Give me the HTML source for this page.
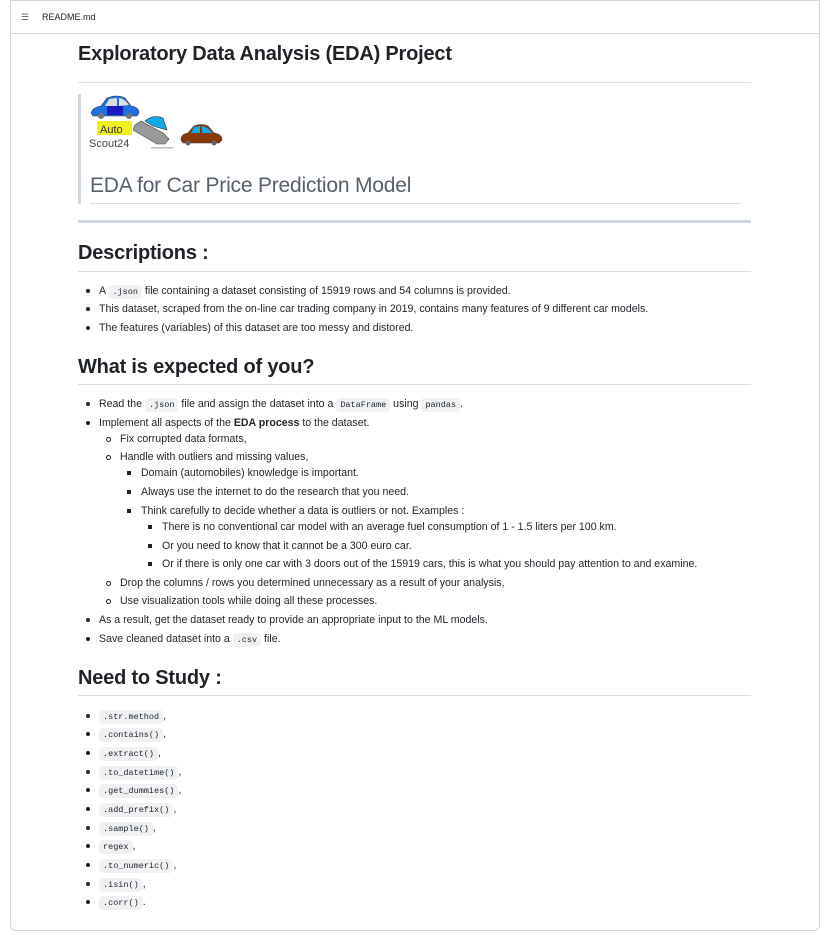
<!DOCTYPE html>
<html><head><meta charset="utf-8"><style>
body{margin:0;width:827px;height:935px;background:#fff;position:relative;overflow:hidden;font-family:"Liberation Sans",sans-serif;color:#1f2328}
.box{position:absolute;left:10px;top:0;width:808px;height:929px;border:1px solid #d0d7de;border-radius:0 0 6px 6px}
.hdr{position:absolute;left:10px;top:33px;width:809px;height:1px;background:#d0d7de}
.t{position:absolute;font-size:10.6px;line-height:18px;white-space:nowrap}
.h{position:absolute;font-size:20px;font-weight:bold;line-height:28px;white-space:nowrap;letter-spacing:-0.2px}
.ln{position:absolute;height:1px;background:#d8dee4}
code{font-family:"Liberation Mono",monospace;font-size:8.5px;background:#eff1f3;border-radius:4px;padding:2px 4px;color:#1f2328}
.b{position:absolute;width:4px;height:4px;border-radius:50%;background:#1f2328}
.c{position:absolute;width:3px;height:3px;border-radius:50%;border:1px solid #1f2328}
.s{position:absolute;width:4px;height:4px;background:#1f2328}
</style></head><body>
<div class="box"></div><div class="hdr"></div>
<div class="t" style="left:21px;top:8px;font-size:9px;color:#57606a">&#9776;</div>
<div class="t" style="left:42px;top:8px;font-size:9px">README.md</div>

<div class="h" style="left:78px;top:40px">Exploratory Data Analysis (EDA) Project</div>
<div class="ln" style="left:78px;top:82px;width:673px"></div>

<div style="position:absolute;left:78px;top:94px;width:3px;height:110px;background:#d0d7de"></div>
<svg style="position:absolute;left:89px;top:95px" width="140" height="58" viewBox="0 0 140 58">
<path d="M2 18 Q4 12 12 11 L18 3 Q28 -1 36 3 L42 11 Q50 12 50 18 L48 21 H4Z" fill="#1e6fe0" stroke="#333" stroke-width="0.6"/>
<path d="M20 4 L28 3 L28 11 L16 11Z" fill="#ddd"/><path d="M30 3 Q36 4 40 10 L30 11Z" fill="#ddd"/>
<rect x="18" y="11" width="16" height="9" fill="#1a1ac0"/>
<circle cx="12" cy="21" r="3" fill="#777"/><circle cx="40" cy="21" r="3" fill="#777"/>
<rect x="8" y="26" width="35" height="14" fill="#f0f020"/>
<text x="11" y="38" font-family="Liberation Sans,sans-serif" font-size="11" fill="#333">Auto</text>
<text x="0" y="52" font-family="Liberation Sans,sans-serif" font-size="11" fill="#444">Scout24</text>
<path d="M46 30 L52 26 L74 38 L80 44 L76 49 L68 49 L44 35Z" fill="#999" stroke="#444" stroke-width="0.6"/>
<path d="M56 26 Q64 19 74 23 L78 35 L64 31Z" fill="#14a8e8" stroke="#333" stroke-width="0.6"/>
<rect x="62" y="52" width="22" height="1.5" fill="#bbb"/>
<path d="M92 45 Q92 39 99 38 L105 31 Q113 28 119 31 L125 38 Q133 39 133 45 L130 48 H94Z" fill="#8a3a08" stroke="#333" stroke-width="0.6"/>
<path d="M105 32 L111 31 L111 38 L102 38Z" fill="#14a8e8"/><path d="M113 31 Q119 32 123 38 L113 38Z" fill="#14a8e8"/>
<circle cx="99" cy="48" r="2.5" fill="#666"/><circle cx="125" cy="48" r="2.5" fill="#666"/>
</svg>
<div class="h" style="left:90px;top:172px;color:#57606a;font-weight:normal;font-size:21px">EDA for Car Price Prediction Model</div>
<div class="ln" style="left:90px;top:203px;width:651px"></div>
<div style="position:absolute;left:78px;top:220px;width:673px;height:3px;background:#d0d7de"></div>

<div class="h" style="left:78px;top:239px">Descriptions :</div>
<div class="ln" style="left:78px;top:271px;width:673px"></div>
<div class="b" style="left:86px;top:289px"></div><div class="t" style="left:99px;top:282px">A <code>.json</code> file containing a dataset consisting of 15919 rows and 54 columns is provided.</div>
<div class="b" style="left:86px;top:307px"></div><div class="t" style="left:99px;top:300px">This dataset, scraped from the on-line car trading company in 2019, contains many features of 9 different car models.</div>
<div class="b" style="left:86px;top:326px"></div><div class="t" style="left:99px;top:319px">The features (variables) of this dataset are too messy and distored.</div>

<div class="h" style="left:78px;top:353px">What is expected of you?</div>
<div class="ln" style="left:78px;top:384px;width:673px"></div>
<div class="b" style="left:86px;top:402px"></div><div class="t" style="left:99px;top:395px">Read the <code>.json</code> file and assign the dataset into a <code>DataFrame</code> using <code>pandas</code>.</div>
<div class="b" style="left:86px;top:421px"></div><div class="t" style="left:99px;top:414px">Implement all aspects of the <b>EDA process</b> to the dataset.</div>
<div class="c" style="left:106px;top:437px"></div><div class="t" style="left:120px;top:430px">Fix corrupted data formats,</div>
<div class="c" style="left:106px;top:455px"></div><div class="t" style="left:120px;top:448px">Handle with outliers and missing values,</div>
<div class="s" style="left:127px;top:471px"></div><div class="t" style="left:141px;top:464px">Domain (automobiles) knowledge is important.</div>
<div class="s" style="left:127px;top:490px"></div><div class="t" style="left:141px;top:483px">Always use the internet to do the research that you need.</div>
<div class="s" style="left:127px;top:509px"></div><div class="t" style="left:141px;top:502px">Think carefully to decide whether a data is outliers or not. Examples :</div>
<div class="s" style="left:148px;top:525px"></div><div class="t" style="left:162px;top:518px">There is no conventional car model with an average fuel consumption of 1 - 1.5 liters per 100 km.</div>
<div class="s" style="left:148px;top:544px"></div><div class="t" style="left:162px;top:537px">Or you need to know that it cannot be a 300 euro car.</div>
<div class="s" style="left:148px;top:562px"></div><div class="t" style="left:162px;top:555px">Or if there is only one car with 3 doors out of the 15919 cars, this is what you should pay attention to and examine.</div>
<div class="c" style="left:106px;top:581px"></div><div class="t" style="left:120px;top:574px">Drop the columns / rows you determined unnecessary as a result of your analysis,</div>
<div class="c" style="left:106px;top:599px"></div><div class="t" style="left:120px;top:592px">Use visualization tools while doing all these processes.</div>
<div class="b" style="left:86px;top:618px"></div><div class="t" style="left:99px;top:611px">As a result, get the dataset ready to provide an appropriate input to the ML models.</div>
<div class="b" style="left:86px;top:637px"></div><div class="t" style="left:99px;top:630px">Save cleaned dataset into a <code>.csv</code> file.</div>

<div class="h" style="left:78px;top:664px">Need to Study :</div>
<div class="ln" style="left:78px;top:695px;width:673px"></div>
<div class="b" style="left:86px;top:714px"></div><div class="t" style="left:99px;top:707px"><code>.str.method</code>,</div>
<div class="b" style="left:86px;top:732px"></div><div class="t" style="left:99px;top:725px"><code>.contains()</code>,</div>
<div class="b" style="left:86px;top:751px"></div><div class="t" style="left:99px;top:744px"><code>.extract()</code>,</div>
<div class="b" style="left:86px;top:770px"></div><div class="t" style="left:99px;top:763px"><code>.to_datetime()</code>,</div>
<div class="b" style="left:86px;top:788px"></div><div class="t" style="left:99px;top:781px"><code>.get_dummies()</code>,</div>
<div class="b" style="left:86px;top:807px"></div><div class="t" style="left:99px;top:800px"><code>.add_prefix()</code>,</div>
<div class="b" style="left:86px;top:826px"></div><div class="t" style="left:99px;top:819px"><code>.sample()</code>,</div>
<div class="b" style="left:86px;top:844px"></div><div class="t" style="left:99px;top:837px"><code>regex</code>,</div>
<div class="b" style="left:86px;top:863px"></div><div class="t" style="left:99px;top:856px"><code>.to_numeric()</code>,</div>
<div class="b" style="left:86px;top:882px"></div><div class="t" style="left:99px;top:875px"><code>.isin()</code>,</div>
<div class="b" style="left:86px;top:900px"></div><div class="t" style="left:99px;top:893px"><code>.corr()</code>.</div>
</body></html>
